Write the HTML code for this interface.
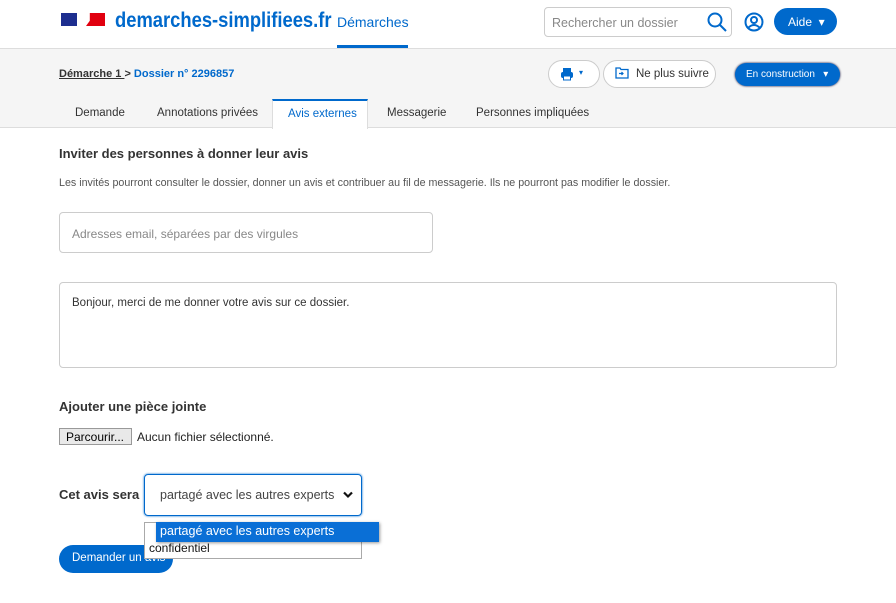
<!DOCTYPE html>
<html><head><meta charset="utf-8"><style>
*{box-sizing:border-box;margin:0;padding:0}
body{width:896px;height:603px;overflow:hidden;background:#fff;font-family:"Liberation Sans",sans-serif;color:#333;position:relative}
.a{position:absolute}
.blue{color:#0069cc}
</style></head><body>
<!-- header -->
<div class="a" style="left:61px;top:13px;width:16px;height:13px;background:#1d2e8f"></div>
<div class="a" style="left:86px;top:13px;width:19px;height:13px;background:#e1000f;clip-path:polygon(20% 0,100% 0,100% 100%,0 100%,20% 60%)"></div>
<div class="a blue" style="left:115px;top:9px;font-size:21px;font-weight:bold;transform:scaleX(0.875);transform-origin:0 0;white-space:nowrap">demarches-simplifiees.fr</div>
<div class="a blue" style="left:337px;top:14px;font-size:14px">Démarches</div>
<div class="a" style="left:337px;top:45px;width:71px;height:3px;background:#0069cc"></div>
<div class="a" style="left:544px;top:7px;width:188px;height:30px;border:1px solid #ccc;border-radius:4px;font-size:12.5px;color:#888;padding:8px 7px">Rechercher un dossier</div>
<svg class="a" style="left:706px;top:11px" width="22" height="22" viewBox="0 0 22 22"><circle cx="9" cy="9" r="6.5" fill="none" stroke="#0069cc" stroke-width="2"/><path d="M14 14l6 6" stroke="#0069cc" stroke-width="2"/></svg>
<svg class="a" style="left:744px;top:12px" width="20" height="20" viewBox="0 0 20 20"><circle cx="10" cy="10" r="8.5" fill="none" stroke="#0069cc" stroke-width="2"/><circle cx="10" cy="8" r="3" fill="none" stroke="#0069cc" stroke-width="2"/><path d="M4.5 15.5q5.5-5 11 0" fill="none" stroke="#0069cc" stroke-width="2"/></svg>
<div class="a" style="left:774px;top:8px;width:63px;height:27px;border-radius:14px;background:#0069cc;color:#fff;font-size:12px;padding:7px 0 0 14px">Aide &nbsp;▾</div>
<!-- grey band -->
<div class="a" style="left:0;top:48px;width:896px;height:80px;background:#f5f5f5;border-top:1px solid #ddd;border-bottom:1px solid #ddd"></div>
<div class="a" style="left:59px;top:68px;font-size:11px;font-weight:bold;color:#333"><span style="text-decoration:underline">Démarche 1 </span> &gt; <span class="blue">Dossier n° 2296857</span></div>
<div class="a" style="left:548px;top:60px;width:52px;height:28px;border:1px solid #ccc;border-radius:14px;background:#fff"></div>
<svg class="a" style="left:560px;top:67px" width="14" height="14" viewBox="0 0 14 14"><rect x="3" y="1" width="8" height="4" fill="#0069cc"/><rect x="1" y="5" width="12" height="6" rx="2" fill="#0069cc"/><rect x="3.5" y="9" width="7" height="4" fill="#fff" stroke="#0069cc"/></svg>
<div class="a blue" style="left:579px;top:68px;font-size:8px">▾</div>
<div class="a" style="left:603px;top:60px;width:113px;height:28px;border:1px solid #ccc;border-radius:14px;background:#fff;font-size:11.5px;padding:7px 0 0 32px">Ne plus suivre</div>
<svg class="a" style="left:615px;top:67px" width="14" height="12" viewBox="0 0 14 12"><path d="M1 1h4l1 1.5h7V11H1z" fill="none" stroke="#0069cc" stroke-width="1.3"/><path d="M4 6.5h4M6.5 5l1.5 1.5-1.5 1.5" fill="none" stroke="#0069cc" stroke-width="1.2"/></svg>
<div class="a" style="left:735px;top:63px;width:105px;height:23px;border-radius:12px;background:#0069cc;color:#fff;font-size:10px;padding:6px 0 0 11px;box-shadow:0 0 2px #003">En construction &nbsp;&nbsp;▾</div>
<!-- tabs -->
<div class="a" style="left:75px;top:107px;font-size:11.5px">Demande</div>
<div class="a" style="left:157px;top:107px;font-size:11.5px">Annotations privées</div>
<div class="a" style="left:272px;top:99px;width:96px;height:30px;background:#fff;border:1px solid #ddd;border-top:2px solid #0069cc;border-bottom:none;font-size:11.5px;color:#0069cc;padding:7px 0 0 15px">Avis externes</div>
<div class="a" style="left:387px;top:107px;font-size:11.5px">Messagerie</div>
<div class="a" style="left:476px;top:107px;font-size:11.5px">Personnes impliquées</div>
<!-- form -->
<div class="a" style="left:59px;top:146px;font-size:13px;font-weight:bold">Inviter des personnes à donner leur avis</div>
<div class="a" style="left:59px;top:177px;font-size:10.7px;color:#555;white-space:nowrap">Les invités pourront consulter le dossier, donner un avis et contribuer au fil de messagerie. Ils ne pourront pas modifier le dossier.</div>
<div class="a" style="left:59px;top:212px;width:374px;height:41px;border:1px solid #ccc;border-radius:4px;font-size:12px;color:#888;padding:14px 12px">Adresses email, séparées par des virgules</div>
<div class="a" style="left:59px;top:282px;width:778px;height:86px;border:1px solid #ccc;border-radius:4px;font-size:11.5px;color:#333;padding:14px 12px">Bonjour, merci de me donner votre avis sur ce dossier.</div>
<div class="a" style="left:59px;top:399px;font-size:13px;font-weight:bold">Ajouter une pièce jointe</div>
<div class="a" style="left:59px;top:428px;width:73px;height:17px;border:1px solid #999;background:#e9e9e9;font-size:12px;padding:1px 0 0 6px;color:#000">Parcourir...</div>
<div class="a" style="left:137px;top:430px;font-size:12px;color:#222">Aucun fichier sélectionné.</div>
<div class="a" style="left:59px;top:487px;font-size:13px;font-weight:bold">Cet avis sera</div>
<div class="a" style="left:144px;top:474px;width:218px;height:42px;border:1px solid #0069cc;border-radius:4px;box-shadow:0 0 2px #0069cc;font-size:12.5px;color:#444;padding:13px 0 0 15px">partagé avec les autres experts</div>
<svg class="a" style="left:343px;top:491px" width="10" height="8" viewBox="0 0 10 8"><path d="M1 1.5l4 4 4-4" fill="none" stroke="#111" stroke-width="2.2"/></svg>
<div class="a" style="left:59px;top:545px;width:114px;height:28px;border-radius:14px;background:#0069cc;color:#fff;font-size:11.5px;padding:7px 0 0 13px">Demander un avis</div>
<div class="a" style="left:144px;top:522px;width:218px;height:37px;border:1px solid #aaa;background:#fff"></div>
<div class="a" style="left:149px;top:541px;font-size:12px;color:#111">confidentiel</div>
<div class="a" style="left:156px;top:522px;width:223px;height:20px;background:#0a6fd6;color:#fff;font-size:12.5px;padding:2px 0 0 4px;box-shadow:1px 1px 3px rgba(0,0,0,.4)">partagé avec les autres experts</div>
</body></html>
